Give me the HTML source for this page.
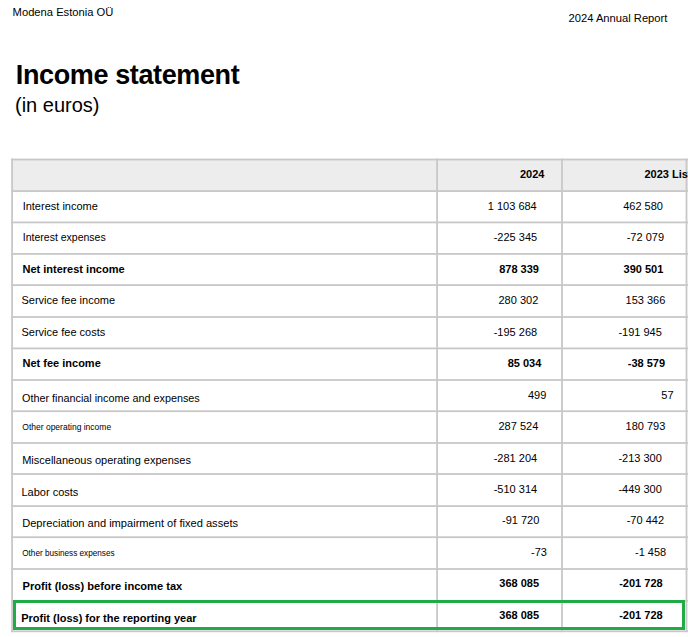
<!DOCTYPE html>
<html><head><meta charset="utf-8"><style>
html,body{margin:0;padding:0;background:#fff;width:688px;height:637px;overflow:hidden;position:relative}
.t{position:absolute;font-family:"Liberation Sans",sans-serif;white-space:nowrap;line-height:40px;color:#000}
.b{position:absolute}
</style></head><body>
<svg class="b" style="left:0;top:0" width="688" height="637"><rect x="12.1" y="159.5" width="675.9" height="31.599999999999994" fill="#ededed"/><rect x="11.20" y="158.60" width="676.80" height="1.8" fill="#c8c8c8"/><rect x="11.20" y="190.20" width="676.80" height="1.8" fill="#c8c8c8"/><rect x="11.20" y="221.50" width="676.80" height="1.8" fill="#c8c8c8"/><rect x="11.20" y="253.00" width="676.80" height="1.8" fill="#c8c8c8"/><rect x="11.20" y="284.20" width="676.80" height="1.8" fill="#c8c8c8"/><rect x="11.20" y="316.10" width="676.80" height="1.8" fill="#c8c8c8"/><rect x="11.20" y="347.50" width="676.80" height="1.8" fill="#c8c8c8"/><rect x="11.20" y="379.10" width="676.80" height="1.8" fill="#c8c8c8"/><rect x="11.20" y="410.30" width="676.80" height="1.8" fill="#c8c8c8"/><rect x="11.20" y="442.10" width="676.80" height="1.8" fill="#c8c8c8"/><rect x="11.20" y="473.10" width="676.80" height="1.8" fill="#c8c8c8"/><rect x="11.20" y="505.20" width="676.80" height="1.8" fill="#c8c8c8"/><rect x="11.20" y="536.30" width="676.80" height="1.8" fill="#c8c8c8"/><rect x="11.20" y="568.10" width="676.80" height="1.8" fill="#c8c8c8"/><rect x="11.20" y="600.10" width="676.80" height="1.8" fill="#c8c8c8"/><rect x="11.20" y="630.40" width="676.80" height="1.8" fill="#c8c8c8"/><rect x="11.20" y="158.60" width="1.8" height="473.60" fill="#c8c8c8"/><rect x="436.20" y="158.60" width="1.8" height="473.60" fill="#c8c8c8"/><rect x="561.10" y="158.60" width="1.8" height="473.60" fill="#c8c8c8"/><rect x="685.60" y="158.60" width="1.8" height="473.60" fill="#c8c8c8"/><rect x="14.5" y="601.5" width="669" height="27" fill="none" stroke="#1eab48" stroke-width="3"/></svg>
<div class="t" style="left:12.60px;top:-8.00px;font-size:11.2px;font-weight:400;">Modena Estonia OÜ</div>
<div class="t" style="left:568.50px;top:-2.00px;font-size:11.2px;font-weight:400;">2024 Annual Report</div>
<div class="t" style="left:15.80px;top:55.00px;font-size:27px;font-weight:700;letter-spacing:-0.38px">Income statement</div>
<div class="t" style="left:15.00px;top:85.00px;font-size:20px;font-weight:400;">(in euros)</div>
<div class="t" style="left:519.90px;top:154.00px;font-size:11px;font-weight:700;">2024</div>
<div class="t" style="left:644.40px;top:154.00px;font-size:11px;font-weight:700;">2023 Listed</div>
<div class="t" style="left:22.65px;top:186.00px;font-size:11px;font-weight:400;">Interest income</div>
<div class="t" style="left:22.80px;top:217.00px;font-size:10.5px;font-weight:400;">Interest expenses</div>
<div class="t" style="left:22.50px;top:249.00px;font-size:11px;font-weight:700;">Net interest income</div>
<div class="t" style="left:21.50px;top:280.00px;font-size:11px;font-weight:400;">Service fee income</div>
<div class="t" style="left:21.50px;top:312.00px;font-size:11px;font-weight:400;">Service fee costs</div>
<div class="t" style="left:22.50px;top:343.00px;font-size:11px;font-weight:700;">Net fee income</div>
<div class="t" style="left:22.10px;top:378.00px;font-size:10.8px;font-weight:400;">Other financial income and expenses</div>
<div class="t" style="left:22.30px;top:407.00px;font-size:8.5px;font-weight:400;">Other operating income</div>
<div class="t" style="left:22.20px;top:440.00px;font-size:11px;font-weight:400;">Miscellaneous operating expenses</div>
<div class="t" style="left:21.50px;top:472.00px;font-size:11px;font-weight:400;">Labor costs</div>
<div class="t" style="left:22.20px;top:503.00px;font-size:11.1px;font-weight:400;">Depreciation and impairment of fixed assets</div>
<div class="t" style="left:22.20px;top:534.00px;font-size:8.2px;font-weight:400;">Other business expenses</div>
<div class="t" style="left:22.60px;top:566.00px;font-size:11.1px;font-weight:700;">Profit (loss) before income tax</div>
<div class="t" style="left:21.20px;top:598.00px;font-size:11px;font-weight:700;">Profit (loss) for the reporting year</div>
<div class="t" style="left:487.80px;top:186.00px;font-size:11px;font-weight:400;">1 103 684</div>
<div class="t" style="left:493.70px;top:217.00px;font-size:11px;font-weight:400;">-225 345</div>
<div class="t" style="left:499.20px;top:249.00px;font-size:11px;font-weight:700;">878 339</div>
<div class="t" style="left:498.50px;top:280.00px;font-size:11px;font-weight:400;">280 302</div>
<div class="t" style="left:493.70px;top:312.00px;font-size:11px;font-weight:400;">-195 268</div>
<div class="t" style="left:507.70px;top:343.00px;font-size:11px;font-weight:700;">85 034</div>
<div class="t" style="left:528.00px;top:375.00px;font-size:11px;font-weight:400;">499</div>
<div class="t" style="left:498.50px;top:406.00px;font-size:11px;font-weight:400;">287 524</div>
<div class="t" style="left:493.70px;top:438.00px;font-size:11px;font-weight:400;">-281 204</div>
<div class="t" style="left:493.70px;top:469.00px;font-size:11px;font-weight:400;">-510 314</div>
<div class="t" style="left:502.00px;top:500.00px;font-size:11px;font-weight:400;">-91 720</div>
<div class="t" style="left:531.10px;top:532.00px;font-size:11px;font-weight:400;">-73</div>
<div class="t" style="left:499.30px;top:563.00px;font-size:11px;font-weight:700;">368 085</div>
<div class="t" style="left:499.30px;top:595.00px;font-size:11px;font-weight:700;">368 085</div>
<div class="t" style="left:623.20px;top:186.00px;font-size:11px;font-weight:400;">462 580</div>
<div class="t" style="left:626.70px;top:217.00px;font-size:11px;font-weight:400;">-72 079</div>
<div class="t" style="left:623.60px;top:249.00px;font-size:11px;font-weight:700;">390 501</div>
<div class="t" style="left:625.60px;top:280.00px;font-size:11px;font-weight:400;">153 366</div>
<div class="t" style="left:618.40px;top:312.00px;font-size:11px;font-weight:400;">-191 945</div>
<div class="t" style="left:627.80px;top:343.00px;font-size:11px;font-weight:700;">-38 579</div>
<div class="t" style="left:661.30px;top:375.00px;font-size:11px;font-weight:400;">57</div>
<div class="t" style="left:625.60px;top:406.00px;font-size:11px;font-weight:400;">180 793</div>
<div class="t" style="left:618.40px;top:438.00px;font-size:11px;font-weight:400;">-213 300</div>
<div class="t" style="left:618.40px;top:469.00px;font-size:11px;font-weight:400;">-449 300</div>
<div class="t" style="left:626.70px;top:500.00px;font-size:11px;font-weight:400;">-70 442</div>
<div class="t" style="left:635.00px;top:532.00px;font-size:11px;font-weight:400;">-1 458</div>
<div class="t" style="left:619.20px;top:563.00px;font-size:11px;font-weight:700;">-201 728</div>
<div class="t" style="left:619.20px;top:595.00px;font-size:11px;font-weight:700;">-201 728</div>
</body></html>
